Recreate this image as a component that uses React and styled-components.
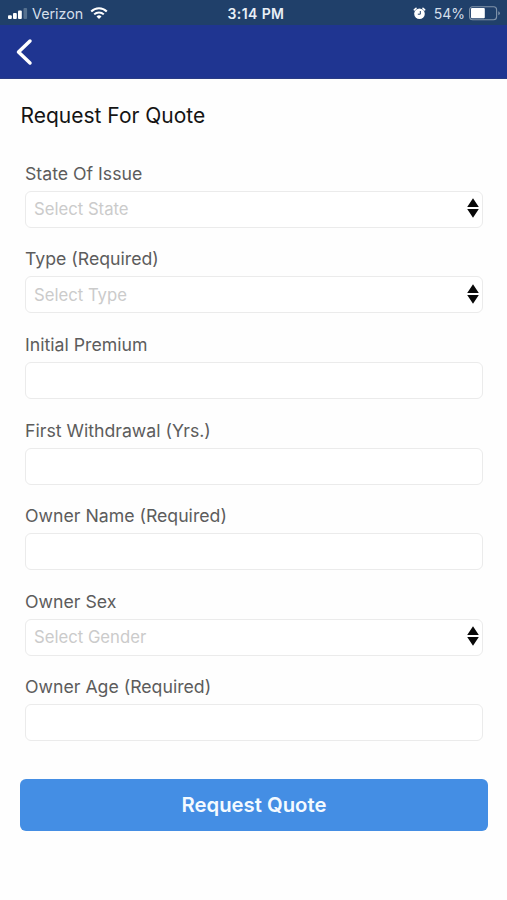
import React from 'react';
import styled, { createGlobalStyle } from 'styled-components';

const GlobalStyle = createGlobalStyle`
  * {
    box-sizing: border-box;
  }

  body {
    margin: 0;
    background: #fefefe;
    font-family: Inter, 'Liberation Sans', sans-serif;
  }
`;

const Screen = styled.div`
  width: 507px;
  height: 900px;
  overflow: hidden;
  background: #fefefe;
`;

const StatusBar = styled.div`
  height: 25px;
  padding: 2px 6px 0 8px;

  display: grid;
  grid-template-columns: 1fr auto 1fr;
  align-items: center;

  color: #fff;
  background: #20406a;
  font-size: 14px;
  line-height: 20px;
`;

const StatusGroup = styled.div`
  display: flex;
  align-items: center;
  justify-content: ${({ $end }) => ($end ? 'flex-end' : 'flex-start')};

  svg {
    display: block;
    flex: none;
  }
`;

const Carrier = styled.span`
  margin: 0 7px 0 4px;
  color: #d5dfea;
  font-size: 14.3px;
`;

const Time = styled.span`
  padding-left: 3px;
  color: #e8eff6;
  font-size: 14px;
  font-weight: 600;
  letter-spacing: 0.4px;
`;

const Charge = styled.span`
  margin: 0 4px 0 8px;
  color: #d5dfea;
`;

const NavBar = styled.nav`
  height: 54px;
  padding: 0 0 0 15px;

  display: flex;
  align-items: center;

  background: #1f3591;
  border-bottom: 1px solid #2a3c84;
`;

const BackButton = styled.button`
  display: flex;
  padding: 0;
  border: 0;
  background: none;
`;

const Form = styled.form`
  padding: 24px 19px 0 20px;
`;

const Title = styled.h1`
  margin: 0 0 33.8px;
  padding-left: 0.5px;

  color: #141414;
  font-size: 21px;
  font-weight: 400;
  line-height: 26px;
`;

const Fields = styled.div`
  padding: 0 5px;

  display: flex;
  flex-direction: column;
  gap: 20.6px;
`;

const Field = styled.label`
  display: flex;
  flex-direction: column;
  gap: 6px;
`;

const Label = styled.span`
  color: #5c5c5c;
  font-size: 17.7px;
  line-height: 22px;
`;

const Control = styled.div`
  height: 37px;
  padding: 0 3px 0 8px;

  display: flex;
  align-items: center;

  background: #fff;
  border: 1px solid #ebebeb;
  border-radius: 6px;

  svg {
    flex: none;
    margin-bottom: 2px;
  }
`;

const Input = styled.input`
  flex: 1;
  min-width: 0;
  padding: 0;

  border: 0;
  outline: 0;
  background: none;
  font: 400 16.7px/20px Inter, 'Liberation Sans', sans-serif;

  &::placeholder {
    color: #cbcbcb;
    opacity: 1;
  }
`;

const SubmitButton = styled.button`
  width: 100%;
  height: 52px;
  margin-top: 38px;
  padding: 0;

  border: 0;
  border-radius: 6px;
  color: #f4faff;
  background: #448ee4;
  font: 600 20.3px/26px Inter, 'Liberation Sans', sans-serif;
`;

const SignalIcon = () => (
  <svg width="20" height="12" viewBox="0 0 20 12">
    <g fill="#fff">
      <rect x="0" y="7.2" width="3.8" height="3.8" rx="1" />
      <rect x="5" y="5" width="3.8" height="6" rx="1" />
      <rect x="10" y="2.4" width="3.8" height="8.6" rx="1" />
    </g>
    <rect x="15.5" y="0" width="3.6" height="11" rx="1" fill="#56718f" />
  </svg>
);

const WifiIcon = () => (
  <svg width="18" height="13" viewBox="0 0 18 13" fill="none" stroke="#fff">
    <path d="M1.2 4.4a11.1 11.1 0 0 1 15.6 0" strokeWidth="2.1" />
    <path d="M4.2 7.4a6.8 6.8 0 0 1 9.6 0" strokeWidth="2" />
    <path d="M6.5 9.5a3.6 3.6 0 0 1 5 0L9 12z" fill="#fff" stroke="none" />
  </svg>
);

const AlarmIcon = () => (
  <svg width="13" height="13" viewBox="0 0 13 13" fill="none">
    <path
      d="M1.3 2.8 3 1.3M11.7 2.8 10 1.3"
      stroke="#fff"
      strokeWidth="1.6"
      strokeLinecap="round"
    />
    <circle cx="6.5" cy="6.8" r="5.3" fill="#fff" />
    <path d="M7.3 4v3.2H4.8" stroke="#20406a" strokeWidth="1" />
  </svg>
);

const BatteryIcon = () => (
  <svg width="32" height="15" viewBox="0 0 32 15">
    <rect x="0.6" y="0.7" width="27" height="13" rx="3" fill="none" stroke="#8295ab" strokeWidth="1.1" />
    <rect x="2" y="2.1" width="13.8" height="10.2" rx="1" fill="#fff" />
    <path d="M29.3 5.2q1.5.6 1.5 2t-1.5 2z" fill="#8295ab" />
  </svg>
);

const BackIcon = () => (
  <svg width="18" height="28" viewBox="0 0 18 28" fill="none">
    <path d="M15 3 3.5 14 15 25" stroke="#fff" strokeWidth="3.5" strokeLinecap="round" strokeLinejoin="round" />
  </svg>
);

const SortIcon = () => (
  <svg width="12" height="20" viewBox="0 0 12 20">
    <path d="M6 .2 11.8 9H.2zM.2 11h11.6L6 19.8z" fill="#080808" />
  </svg>
);

const fields = [
  { label: 'State Of Issue', placeholder: 'Select State' },
  { label: 'Type (Required)', placeholder: 'Select Type' },
  { label: 'Initial Premium' },
  { label: 'First Withdrawal (Yrs.)' },
  { label: 'Owner Name (Required)' },
  { label: 'Owner Sex', placeholder: 'Select Gender' },
  { label: 'Owner Age (Required)' },
];

const FormField = ({ label, placeholder }) => (
  <Field>
    <Label>{label}</Label>
    <Control>
      <Input placeholder={placeholder} readOnly={!!placeholder} />
      {placeholder && <SortIcon />}
    </Control>
  </Field>
);

const App = () => {
  return (
    <Screen>
      <GlobalStyle />
      <StatusBar>
        <StatusGroup>
          <SignalIcon />
          <Carrier>Verizon</Carrier>
          <WifiIcon />
        </StatusGroup>
        <Time>3:14 PM</Time>
        <StatusGroup $end>
          <AlarmIcon />
          <Charge>54%</Charge>
          <BatteryIcon />
        </StatusGroup>
      </StatusBar>
      <NavBar>
        <BackButton type="button" aria-label="Back">
          <BackIcon />
        </BackButton>
      </NavBar>
      <Form>
        <Title>Request For Quote</Title>
        <Fields>
          {fields.map((field) => (
            <FormField key={field.label} {...field} />
          ))}
        </Fields>
        <SubmitButton type="button">Request Quote</SubmitButton>
      </Form>
    </Screen>
  );
};

export default App;
